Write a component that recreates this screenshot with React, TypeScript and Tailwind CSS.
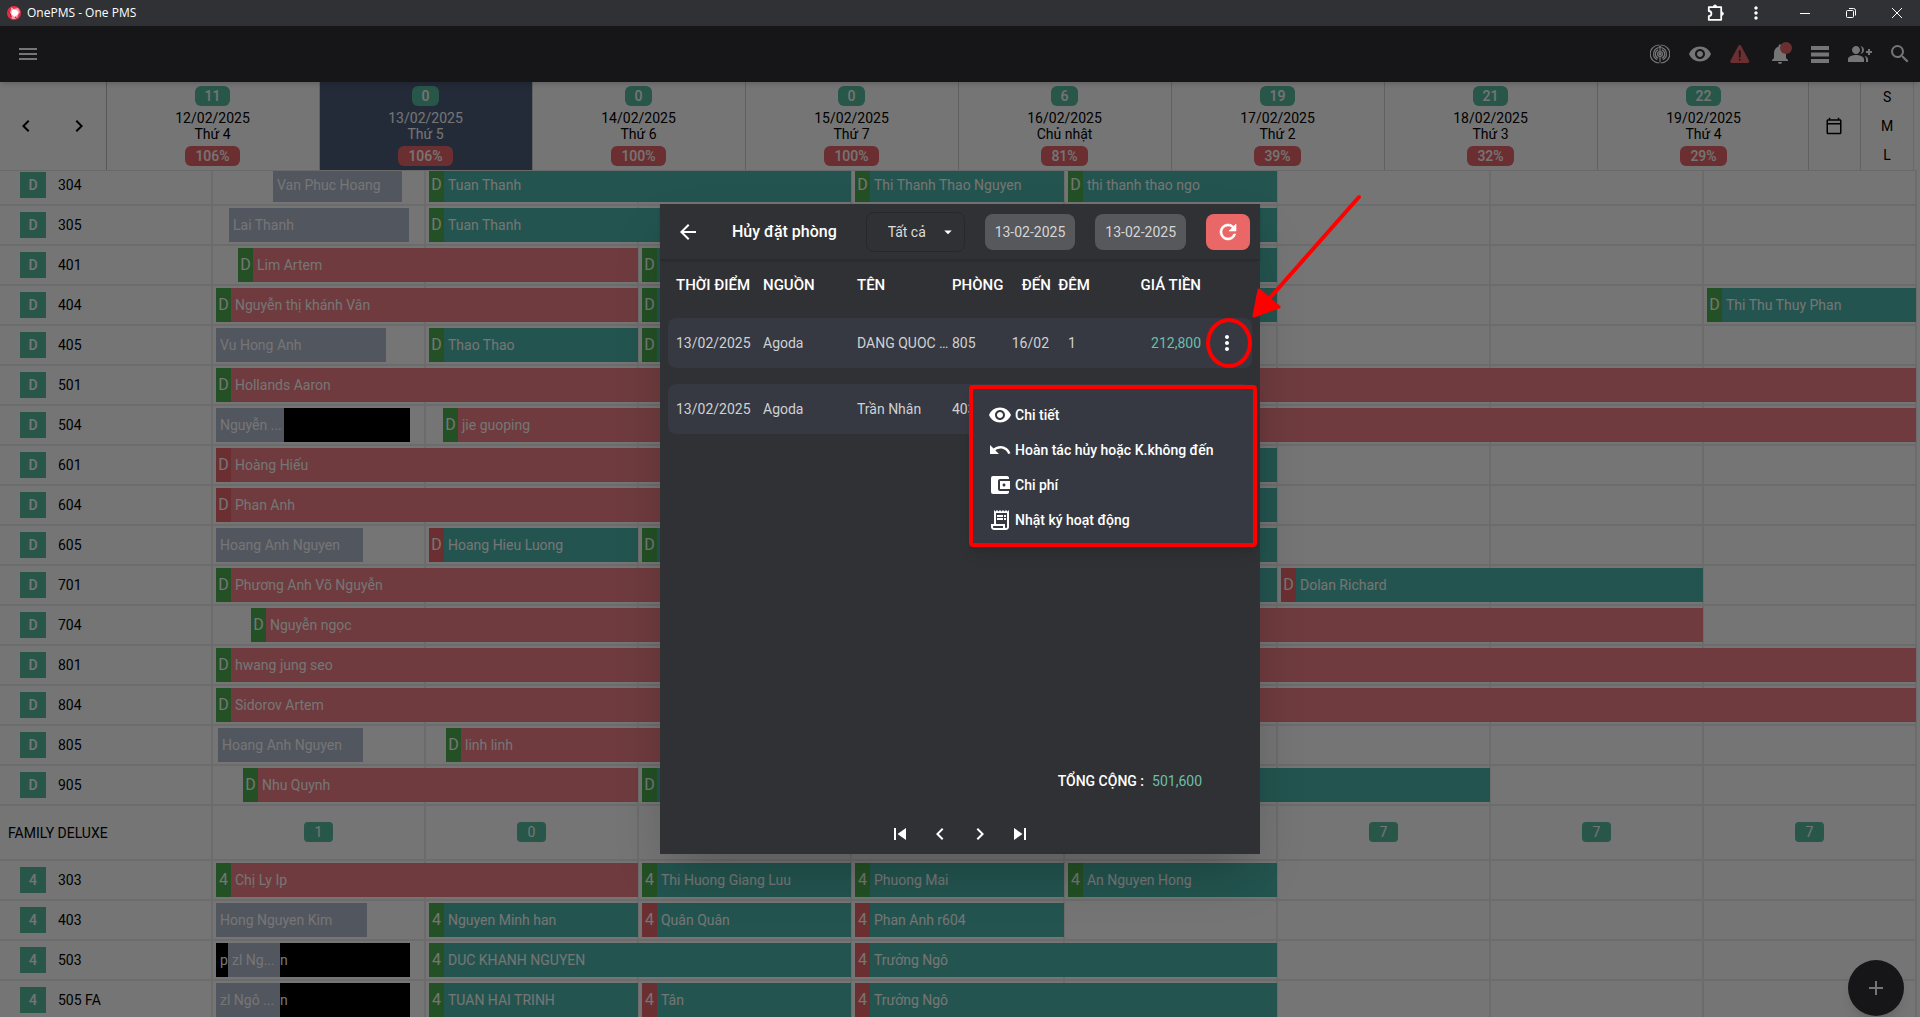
import type { ReactNode } from "react";
import {
  MdAccountBalanceWallet,
  MdAdd,
  MdArrowBack,
  MdArrowDropDown,
  MdChevronLeft,
  MdChevronRight,
  MdGroupAdd,
  MdMenu,
  MdMoreVert,
  MdNotifications,
  MdOutlineCalendarToday,
  MdOutlineReceiptLong,
  MdSearch,
  MdSkipNext,
  MdSkipPrevious,
  MdUndo,
  MdVisibility,
} from "react-icons/md";
import { IoWarning } from "react-icons/io5";

// Timeline units: one day is 213 wide, eight days are shown
const TIMELINE = 213 * 8;

type Kind = "teal" | "red" | "grey" | "black";
type Flag = "green" | "red";
type Bar = { from: number; to: number; name: string; kind: Kind; flag?: Flag };
type Room = { room: string; bars: Bar[] };

const barColor: Record<Kind, string> = {
  teal: "bg-[#4eb7ac]",
  red: "bg-[#f18087]",
  grey: "bg-[#b3bbcf]",
  black: "bg-black",
};

const flagColor: Record<Flag, string> = { green: "bg-[#4caf50]", red: "bg-[#e9676b]" };

const b = (from: number, to: number, name: string, kind: Kind, flag?: Flag): Bar => ({ from, to, name, kind, flag });

const deluxeRooms: Room[] = [
  {
    room: "304",
    bars: [
      b(60, 189, "Van Phuc Hoang", "grey"),
      b(216, 638, "Tuan Thanh", "teal", "green"),
      b(642, 851, "Thi Thanh Thao Nguyen", "teal", "green"),
      b(855, 1064, "thi thanh thao ngo", "teal", "green"),
    ],
  },
  { room: "305", bars: [b(16, 196, "Lai Thanh", "grey"), b(216, 1064, "Tuan Thanh", "teal", "green")] },
  { room: "401", bars: [b(25, 425, "Lim Artem", "red", "green"), b(429, 1064, "", "teal", "green")] },
  {
    room: "404",
    bars: [
      b(3, 425, "Nguyễn thị khánh Vân", "red", "green"),
      b(429, 1064, "", "teal", "green"),
      b(1494, 1703, "Thi Thu Thuy Phan", "teal", "green"),
    ],
  },
  {
    room: "405",
    bars: [b(3, 173, "Vu Hong Anh", "grey"), b(216, 425, "Thao Thao", "teal", "green"), b(429, 851, "", "teal", "green")],
  },
  { room: "501", bars: [b(3, 1703, "Hollands Aaron", "red", "green")] },
  {
    room: "504",
    bars: [b(3, 71, "Nguyễn ...", "grey"), b(71, 197, "", "black"), b(230, 1703, "jie guoping", "red", "green")],
  },
  { room: "601", bars: [b(3, 638, "Hoàng Hiếu", "red", "red"), b(642, 1064, "", "teal", "green")] },
  { room: "604", bars: [b(3, 638, "Phan Anh", "red", "red"), b(642, 1064, "", "teal", "green")] },
  {
    room: "605",
    bars: [
      b(3, 150, "Hoang Anh Nguyen", "grey"),
      b(216, 425, "Hoang Hieu Luong", "teal", "red"),
      b(429, 1064, "", "teal", "green"),
    ],
  },
  {
    room: "701",
    bars: [
      b(3, 638, "Phương Anh Võ Nguyễn", "red", "green"),
      b(642, 1064, "", "teal", "green"),
      b(1068, 1490, "Dolan Richard", "teal", "red"),
    ],
  },
  { room: "704", bars: [b(38, 1490, "Nguyễn ngọc", "red", "green")] },
  { room: "801", bars: [b(3, 1703, "hwang jung seo", "red", "green")] },
  { room: "804", bars: [b(3, 1703, "Sidorov Artem", "red", "green")] },
  { room: "805", bars: [b(5, 150, "Hoang Anh Nguyen", "grey"), b(233, 851, "linh linh", "red", "green")] },
  { room: "905", bars: [b(30, 425, "Nhu Quynh", "red", "green"), b(429, 1277, "", "teal", "green")] },
];

const familyRooms: Room[] = [
  {
    room: "303",
    bars: [
      b(3, 425, "Chị Ly Ip", "red", "green"),
      b(429, 638, "Thi Huong Giang Luu", "teal", "green"),
      b(642, 851, "Phuong Mai", "teal", "green"),
      b(855, 1064, "An Nguyen Hong", "teal", "green"),
    ],
  },
  {
    room: "403",
    bars: [
      b(3, 154, "Hong Nguyen Kim", "grey"),
      b(216, 425, "Nguyen Minh han", "teal", "green"),
      b(429, 638, "Quân Quân", "teal", "red"),
      b(642, 851, "Phan Anh r604", "teal", "red"),
    ],
  },
  {
    room: "503",
    bars: [
      b(3, 15, "p", "black"),
      b(15, 67, "zl Ng...", "grey"),
      b(67, 197, "n", "black"),
      b(216, 638, "DUC KHANH NGUYEN", "teal", "green"),
      b(642, 1064, "Trưởng Ngô", "teal", "red"),
    ],
  },
  {
    room: "505 FA",
    bars: [
      b(3, 67, "zl Ngô ...", "grey"),
      b(67, 197, "n", "black"),
      b(216, 425, "TUAN HAI TRINH", "teal", "green"),
      b(429, 638, "Tân", "teal", "red"),
      b(642, 1064, "Trưởng Ngô", "teal", "red"),
    ],
  },
];

const days = [
  { free: 11, date: "12/02/2025", day: "Thứ 4", rate: "106%" },
  { free: 0, date: "13/02/2025", day: "Thứ 5", rate: "106%", today: true },
  { free: 0, date: "14/02/2025", day: "Thứ 6", rate: "100%" },
  { free: 0, date: "15/02/2025", day: "Thứ 7", rate: "100%" },
  { free: 6, date: "16/02/2025", day: "Chủ nhật", rate: "81%" },
  { free: 19, date: "17/02/2025", day: "Thứ 2", rate: "39%" },
  { free: 21, date: "18/02/2025", day: "Thứ 3", rate: "32%" },
  { free: 22, date: "19/02/2025", day: "Thứ 4", rate: "29%" },
];

const familyFree = [1, 0, 0, 0, 0, 7, 7, 7];

function RadarIcon() {
  return (
    <svg width="20" height="20" viewBox="0 0 20 20" fill="none" stroke="currentColor" strokeWidth="1.2">
      <path d="M9.200 1a9 9 0 0 0 0 18M10.800 1a9 9 0 0 1 0 18" />
      <path d="M8.400 3.600a6.600 6.600 0 0 0-1.200 12.200M11.600 3.600a6.600 6.600 0 0 1 1.200 12.200" />
      <path d="M8.200 5.800a4.500 4.500 0 0 0 0 8.400M11.800 5.800a4.500 4.500 0 0 1 0 8.400" />
      <circle cx="10" cy="10" r="2.4" />
      <path d="M10 2v5.500M10 12.500v6M8.600 3.600 10 2.200l1.400 1.400" />
      <circle cx="10" cy="10" r=".8" fill="currentColor" />
    </svg>
  );
}

function PuzzleIcon() {
  return (
    <svg width="18" height="18" viewBox="0 0 18 18" fill="none" stroke="currentColor" strokeWidth="1.8" strokeLinejoin="round">
      <path d="M1.8 3.2H14.2V15.8H1.8V12.2A2.6 2.6 0 0 0 1.8 7Z" />
      <path d="M6.4 2.6a1.6 1.6 0 0 1 3.2 0ZM14.8 8a1.6 1.6 0 0 1 0 3.2Z" fill="currentColor" strokeWidth="1" />
    </svg>
  );
}

function RefreshIcon() {
  return (
    <svg width="24" height="24" viewBox="0 0 24 24" fill="currentColor" stroke="currentColor" strokeWidth=".6">
      <path d="M17.65 6.35A7.96 7.96 0 0 0 12 4a8 8 0 1 0 7.730 10h-2.080A6 6 0 1 1 12 6c1.660 0 3.140.69 4.220 1.780L13 11h7V4l-2.350 2.350z" />
    </svg>
  );
}

function TitleBar() {
  return (
    <div className="flex h-[26px] shrink-0 items-center justify-between bg-[#303135] pl-[7px] text-white">
      <div className="flex items-center gap-1.5">
        <svg width="14" height="14" viewBox="0 0 14 14">
          <circle cx="7" cy="7" r="7" fill="#e8304c" />
          <path d="M4 1.2 7 3l4-1 2 4-2 3-1 3.4L5 13l-.6-2.6L2.6 7 4 4Z" fill="#f9a3b0" />
          <path d="m5 4 4-.6L11.4 6l-1 3-3.2 1.4L4.4 8Z" fill="#fff" />
          <path d="M1 5.4 2.8 7l1.4 3.4-1 1M8 11l2 1.6" stroke="#b3122e" fill="none" />
        </svg>
        <span className="font-['Open_Sans',sans-serif] text-xs">OnePMS - One PMS</span>
      </div>
      <div className="flex items-center">
        <button aria-label="Extensions" className="flex w-10 justify-center"><PuzzleIcon /></button>
        <button aria-label="More" className="mr-1.5 flex w-10 justify-center"><MdMoreVert size={20} /></button>
        <button aria-label="Minimize" className="flex w-[46px] justify-center">
          <svg width="10" height="10" viewBox="0 0 10 10" stroke="currentColor"><path d="M0 5.5h10" /></svg>
        </button>
        <button aria-label="Restore" className="flex w-[46px] justify-center">
          <svg width="10" height="10" viewBox="0 0 10 10" stroke="currentColor" fill="none">
            <rect x=".5" y="2.5" width="7" height="7" rx="1" />
            <path d="M3 .5h4.5a2 2 0 0 1 2 2V7.500" />
          </svg>
        </button>
        <button aria-label="Close" className="flex w-[46px] justify-center">
          <svg width="10" height="10" viewBox="0 0 10 10" stroke="currentColor"><path d="m0 0 10 10M10 0 0 10" /></svg>
        </button>
      </div>
    </div>
  );
}

function NavButton({ label, children }: { label: string; children: ReactNode }) {
  return (
    <button aria-label={label} className="relative flex h-10 w-10 items-center justify-center">
      {children}
    </button>
  );
}

function NavBar() {
  return (
    <nav className="relative z-20 flex h-14 shrink-0 items-center justify-between bg-[#303135] pl-2 text-white shadow-md">
      <NavButton label="Menu"><MdMenu size={24} /></NavButton>
      <div className="flex items-center">
        <NavButton label="Radar"><RadarIcon /></NavButton>
        <NavButton label="View"><MdVisibility size={24} /></NavButton>
        <NavButton label="Warnings"><IoWarning size={24} className="text-[#e9676b]" /></NavButton>
        <NavButton label="Notifications">
          <MdNotifications size={24} />
          <span className="absolute top-2 right-2 h-3 w-3 rounded-full bg-[#e9676b]" />
        </NavButton>
        <NavButton label="List">
          <svg width="18" height="17" viewBox="0 0 18 17" fill="currentColor">
            <path d="M0 0h18v4H0zM0 6.500h18v4H0zM0 13h18v4H0z" />
          </svg>
        </NavButton>
        <NavButton label="Add guest"><MdGroupAdd size={24} /></NavButton>
        <NavButton label="Search"><MdSearch size={24} /></NavButton>
      </div>
    </nav>
  );
}

function DayHeader() {
  return (
    <div className="relative z-10 grid shrink-0 grid-cols-[repeat(18,minmax(0,1fr))] border-b border-[#e4e4e4] bg-white text-sm leading-4">
      <div className="flex items-center border-r border-[#bdbdbd]">
        <button aria-label="Previous day" className="flex flex-1 justify-center"><MdChevronLeft size={24} /></button>
        <button aria-label="Next day" className="flex flex-1 justify-center"><MdChevronRight size={24} /></button>
      </div>
      {days.map((d) => (
        <div
          key={d.date}
          className={`col-span-2 flex flex-col items-center border-r border-[#d4d4d4] py-1 ${d.today ? "bg-[#4e5d7a] text-white" : "text-black"}`}
        >
          <span className="rounded-md bg-[#58bd9f] px-2.5 py-0.5 font-medium text-white">{d.free}</span>
          <span className="pt-1">{d.date}</span>
          <span className="pb-1">{d.day}</span>
          <span className="rounded-md bg-[#e9676b] px-2.5 py-0.5 font-medium text-white">{d.rate}</span>
        </div>
      ))}
      <div className="mr-[3px] -ml-[3px] flex bg-white">
        <button aria-label="Pick date" className="flex flex-1 items-center justify-center border-x border-[#d4d4d4]">
          <MdOutlineCalendarToday size={18} />
        </button>
        <div className="flex flex-1 flex-col items-center justify-around border-r border-[#e4e4e4]">
          <button>S</button>
          <button>M</button>
          <button>L</button>
        </div>
      </div>
    </div>
  );
}

function GuestBar({ bar, code, prev }: { bar: Bar; code: string; prev: number }) {
  return (
    <div
      className={`flex h-[34px] shrink-0 items-center overflow-hidden whitespace-nowrap text-white ${barColor[bar.kind]}`}
      style={{
        marginLeft: `${((bar.from - prev) / TIMELINE) * 100}%`,
        width: `${((bar.to - bar.from) / TIMELINE) * 100}%`,
      }}
    >
      {bar.flag && (
        <span className={`flex h-full w-[15px] shrink-0 items-center justify-center text-base ${flagColor[bar.flag]}`}>{code}</span>
      )}
      <span className={bar.name === "n" ? "" : "pl-1"}>{bar.name}</span>
    </div>
  );
}

function RoomRow({ room, bars, code }: Room & { code: string }) {
  return (
    <div className="grid h-10 shrink-0 grid-cols-9 border-b-2 border-[#ebebeb]">
      <div className="col-start-1 row-start-1 flex items-center gap-3 border-r-2 border-[#ebebeb] pl-5 text-black">
        <span className="flex h-[26px] w-[26px] items-center justify-center bg-[#58bd9f] font-medium text-white">{code}</span>
        {room}
      </div>
      <div className="col-span-8 col-start-2 row-start-1 grid grid-cols-8">
        {days.map((d) => (
          <div key={d.date} className="border-r-2 border-[#ebebeb]" />
        ))}
      </div>
      <div className="col-span-8 col-start-2 row-start-1 flex items-center">
        {bars.map((bar, i) => (
          <GuestBar key={i} bar={bar} code={code} prev={i ? bars[i - 1].to : 0} />
        ))}
      </div>
    </div>
  );
}

function Timeline() {
  return (
    <div className="-mt-[5px] flex min-h-0 flex-1 flex-col overflow-hidden text-sm">
      {deluxeRooms.map((r) => (
        <RoomRow key={r.room} {...r} code="D" />
      ))}
      <div className="grid h-[55px] shrink-0 grid-cols-9 border-b-2 border-[#ebebeb]">
        <div className="flex items-center border-r-2 border-[#ebebeb] pl-2 text-black">FAMILY DELUXE</div>
        {familyFree.map((n, i) => (
          <div key={i} className="flex items-center justify-center border-r-2 border-[#ebebeb] pb-0.5">
            <span className="rounded bg-[#58bd9f] px-[11px] py-0.5 leading-4 text-white">{n}</span>
          </div>
        ))}
      </div>
      {familyRooms.map((r) => (
        <RoomRow key={r.room} {...r} code="4" />
      ))}
    </div>
  );
}

function ActionMenu() {
  const items = [
    { icon: MdVisibility, label: "Chi tiết" },
    { icon: MdUndo, label: "Hoàn tác hủy hoặc K.không đến" },
    { icon: MdAccountBalanceWallet, label: "Chi phí" },
    { icon: MdOutlineReceiptLong, label: "Nhật ký hoạt động" },
  ];
  return (
    <div className="absolute top-[67px] -right-[5px] z-20 w-72 rounded border-4 border-[#ff0000] bg-[#363941] pt-2 pb-1.5 pl-[15px] shadow-lg">
      {items.map(({ icon: Icon, label }) => (
        <button key={label} className="flex h-[35px] w-full items-center gap-[3px] font-medium text-white">
          <Icon size={24} />
          {label}
        </button>
      ))}
    </div>
  );
}

// Red ring round the row's menu button, with an arrow that points to it
function Callout() {
  return (
    <>
      <span className="pointer-events-none absolute inset-y-0 right-0 w-[46px] rounded-[50%] border-4 border-[#ff0000]" />
      <svg className="pointer-events-none absolute -top-[124px] left-[49px]" width="112" height="126" viewBox="0 0 112 126" fill="#ff0000" stroke="#ff0000">
        <path d="M109 3 18 106" strokeWidth="4" strokeLinecap="round" />
        <path d="m4 122 5-26 20 17Z" strokeWidth="3" strokeLinejoin="round" />
      </svg>
    </>
  );
}

const cancelled = [
  { time: "13/02/2025", source: "Agoda", name: "DANG QUOC …", room: "805", to: "16/02", nights: "1", price: "212,800" },
  { time: "13/02/2025", source: "Agoda", name: "Trần Nhân", room: "403", to: "15/02", nights: "1", price: "288,800" },
];

function CancelDialog() {
  return (
    <div role="dialog" aria-label="Hủy đặt phòng" className="flex min-h-[650px] w-full max-w-[600px] flex-col bg-[#303135] text-sm text-white shadow-2xl">
      <div className="flex h-14 items-center justify-between border-b border-[#2a2b2f] pr-2.5 pl-4 shadow">
        <div className="flex items-center gap-8">
          <button aria-label="Back"><MdArrowBack size={24} /></button>
          <h1 className="text-base font-medium">Hủy đặt phòng</h1>
        </div>
        <div className="flex items-center gap-5">
          <div className="grid items-center">
            <select aria-label="Loại" className="col-start-1 row-start-1 h-10 w-[99px] appearance-none rounded-lg border border-[#27282b] bg-transparent pl-[21px] text-[#dcdcdc]">
              <option>Tất cả</option>
            </select>
            <MdArrowDropDown size={18} className="pointer-events-none col-start-1 row-start-1 mr-2 justify-self-end" />
          </div>
          <button className="h-9 rounded-lg bg-[#57585c] px-2.5 text-[#d6d6d6]">13-02-2025</button>
          <button className="h-9 rounded-lg bg-[#57585c] px-2.5 text-[#d6d6d6]">13-02-2025</button>
          <button aria-label="Refresh" className="flex h-9 w-11 items-center justify-center rounded-lg bg-[#ea6768]">
            <RefreshIcon />
          </button>
        </div>
      </div>
      <div className="px-2">
        <table className="w-full table-fixed border-separate border-spacing-x-0 border-spacing-y-4 text-left whitespace-nowrap">
          <colgroup>
            <col className="w-[86px]" />
            <col className="w-[95px]" />
            <col className="w-[95px]" />
            <col className="w-[60px]" />
            <col className="w-[47px]" />
            <col className="w-[46px]" />
            <col />
            <col className="w-[51px]" />
          </colgroup>
          <thead>
            <tr className="h-[26px] align-top text-[15px] leading-4 [&>th]:pt-px [&>th]:font-medium">
              <th className="pl-2">THỜI ĐIỂM</th>
              <th className="pl-[9px]">NGUỒN</th>
              <th className="pl-2">TÊN</th>
              <th className="pl-2">PHÒNG</th>
              <th className="text-right">ĐẾN</th>
              <th className="text-center">ĐÊM</th>
              <th className="text-right">GIÁ TIỀN</th>
              <th />
            </tr>
          </thead>
          <tbody>
            {cancelled.map((c, i) => (
              <tr key={i} className="h-[50px] text-[#d0d1d3] [&>td]:bg-[#363941]">
                <td className="rounded-l-lg pl-2">{c.time}</td>
                <td className="pl-[9px]">{c.source}</td>
                <td className="pl-2">{c.name}</td>
                <td className="pl-2">{c.room}</td>
                <td className="pr-0.5 text-right">{c.to}</td>
                <td className="pr-1 text-center">{c.nights}</td>
                <td className="text-right text-[#6bbfa8]">{c.price}</td>
                <td className="relative rounded-r-lg text-white">
                  <button aria-label="Thao tác" className="mx-auto flex"><MdMoreVert size={24} /></button>
                  {i === 0 && (
                    <>
                      <Callout />
                      <ActionMenu />
                    </>
                  )}
                </td>
              </tr>
            ))}
          </tbody>
        </table>
      </div>
      <div className="mt-auto flex justify-end gap-2 pr-[58px] font-medium">
        <span>TỔNG CỘNG :</span>
        <span className="font-normal text-[#6bbfa8]">501,600</span>
      </div>
      <div className="mt-[31px] mb-2 flex items-center justify-center gap-4">
        <button aria-label="First page"><MdSkipPrevious size={24} /></button>
        <button aria-label="Previous page"><MdChevronLeft size={24} /></button>
        <button aria-label="Next page"><MdChevronRight size={24} /></button>
        <button aria-label="Last page"><MdSkipNext size={24} /></button>
      </div>
    </div>
  );
}

export default function App() {
  return (
    <div className="flex h-screen flex-col overflow-hidden font-[Roboto,sans-serif]">
      <TitleBar />
      <div className="relative flex min-h-0 flex-1 flex-col bg-white">
        <NavBar />
        <div className="flex min-h-0 flex-1 flex-col pr-[3px]">
          <DayHeader />
          <Timeline />
        </div>
        <button aria-label="Add booking" className="absolute right-4 bottom-px flex h-14 w-14 items-center justify-center rounded-full bg-[#303135] text-white shadow-lg">
          <MdAdd size={24} />
        </button>
        <div className="absolute inset-0 z-30 flex items-center justify-center bg-black/54 pt-[15px]">
          <CancelDialog />
        </div>
      </div>
    </div>
  );
}
